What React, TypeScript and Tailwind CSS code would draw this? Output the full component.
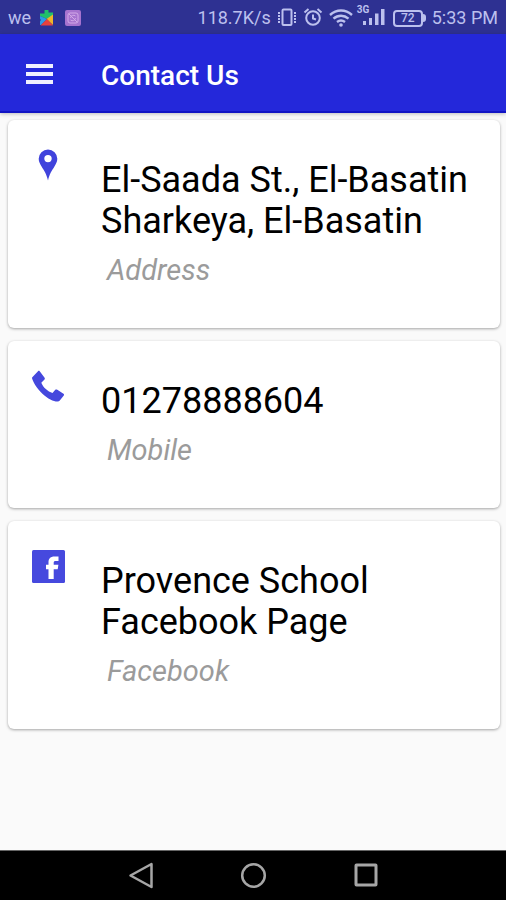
import type { ReactNode } from "react";

type Contact = { title: string; label: string; icon: ReactNode };

function PinIcon() {
  return (
    <svg viewBox="0 0 20 32" className="ml-1.5 h-8 w-5" aria-hidden="true">
      <path
        fill="#4043dc"
        fillRule="evenodd"
        d="M10 0.5a9.3 9.3 0 0 0-9.3 9.3c0 3 1.4 5.3 3 7.9C6 21.400 8.600 25 10 31.500 11.400 25 14 21.400 16.300 17.700c1.600-2.600 3-4.900 3-7.900A9.300 9.300 0 0 0 10 .5Zm0 5.400a3.700 3.700 0 1 1 0 7.400 3.700 3.700 0 0 1 0-7.400Z"
      />
    </svg>
  );
}

function PhoneIcon() {
  return (
    <svg viewBox="0 0 32 32" className="h-8 w-8" aria-hidden="true">
      <path
        fill="#4548dd"
        d="M0.300 7.300 6 1.200c.5-.5 1.200-.5 1.700.1l4.900 6.500c.4.600.3 1.100-.1 1.600L9.300 12.700c1.100 2.500 2.500 4.500 4.500 6.300 2 1.900 4.300 3.300 6.700 4l2.800-3.200c.4-.5 1-.5 1.600-.2l6.600 4.200c.6.400.7 1 .3 1.600l-4 5c-.5.700-1.200 1.100-2.100 1.200-3.400.3-9.800-2.500-15.300-7.800C5.100 18.600 1.200 12.500.1 8.500c-.1-.5-.1-.900.2-1.200Z"
      />
    </svg>
  );
}

function FacebookIcon() {
  return (
    <svg viewBox="0 0 34 34" className="h-[34px] w-[34px]" aria-hidden="true">
      <rect width="33" height="33" rx="1.500" fill="#4649de" />
      <path
        fill="#fff"
        d="M16.500 29V19.300h-2.500v-4.600h2.500v-2.300c0-3.800 2.200-5.900 5.800-5.900h4.200V11h-2.700c-1.600 0-2.100.6-2.100 1.900v1.800h4.700l-.7 4.600h-4V29Z"
      />
    </svg>
  );
}

const contacts: Contact[] = [
  { title: "El-Saada St., El-Basatin Sharkeya, El-Basatin", label: "Address", icon: <PinIcon /> },
  { title: "01278888604", label: "Mobile", icon: <PhoneIcon /> },
  { title: "Provence School Facebook Page", label: "Facebook", icon: <FacebookIcon /> },
];

function StatusBar() {
  return (
    <div className="flex h-[34px] items-center justify-between bg-[#2e3192] pt-0.5 pr-2 pl-2 text-lg text-[#bcc0ee]">
      <div className="flex items-center">
        <span>we</span>
        <svg viewBox="0 0 16 16" className="ml-2 h-4 w-4" aria-hidden="true">
          <path fill="#20c06a" d="M1 3.500h4.500V1a2 2 0 0 1 4 0v1.500H14v4L8 9 1 6Z" />
          <path fill="#2d9be8" d="M1 6l7 3-6 6H1v-3.500a2 2 0 0 0 0-3Z" />
          <path fill="#f0b429" d="M14 4.500V15L7.500 9Z" />
          <path fill="#e8413c" d="M1.500 15.500 8 9l6 6.500Z" />
        </svg>
        <svg viewBox="0 0 16 16" className="ml-2.5 h-4 w-4" aria-hidden="true">
          <rect width="16" height="16" rx="2" fill="#a673cf" />
          <g fill="none" stroke="#d2a9e8" strokeWidth="1">
            <rect x="3" y="3" width="10" height="10" rx="2" />
            <path d="M4 4l8 8M5.500 8a3 3 0 0 1 5-2M10.500 8a3 3 0 0 1-5 2" />
          </g>
        </svg>
      </div>
      <div className="flex items-center">
        <span>118.7K/s</span>
        <svg viewBox="0 0 20 20" className="ml-1.5 h-5 w-5" fill="none" stroke="currentColor" strokeWidth="2" aria-hidden="true">
          <rect x="5.500" y="1.500" width="9" height="15.500" rx="1" />
          <path strokeWidth="2" d="M2 4v11M18 4v11" strokeDasharray="2 1" />
        </svg>
        <svg viewBox="0 0 20 20" className="ml-1.5 h-5 w-5" fill="none" stroke="currentColor" strokeWidth="2" aria-hidden="true">
          <circle cx="10" cy="10" r="6.800" />
          <path d="M10 6.500v4l3 1M1.500 4.500l4-3.500M18.500 4.500l-4-3.500" />
        </svg>
        <svg viewBox="0 0 24 20" className="ml-1.5 h-5 w-6" fill="none" stroke="currentColor" strokeWidth="2.400" aria-hidden="true">
          <path d="M1 7c6.500-6 15.500-6 22 0M4.500 10.700c4.500-4 10.500-4 15 0M8 14c2.500-2 5.500-2 8 0" />
          <circle cx="12" cy="17" r="1.800" fill="currentColor" stroke="none" />
        </svg>
        <div className="relative ml-2 h-5 w-6">
          <span className="absolute -top-1 -left-1 text-[10px] leading-3 font-bold">3G</span>
          <svg viewBox="0 0 24 20" className="h-5 w-6" fill="currentColor" aria-hidden="true">
            <path d="M2 13h3v4H2zM8 10h3v7H8zM14 5.500h3.500V17H14zM20 1h3.500v16H20z" />
          </svg>
        </div>
        <div className="ml-2 flex items-center">
          <span className="flex h-[17px] w-[30px] items-center justify-center rounded-sm border-2 border-current text-xs font-medium">72</span>
          <span className="h-2 w-[3px] rounded-r-sm bg-current" />
        </div>
        <span className="ml-1.5">5:33 PM</span>
      </div>
    </div>
  );
}

function ContactCard({ title, label, icon }: Contact) {
  return (
    <li className="flex rounded-md bg-white pr-6 pl-6 shadow-[0_1px_3px_rgba(0,0,0,0.35)]">
      <div className="w-[69px] shrink-0 pt-[29px]">{icon}</div>
      <div className="min-w-0 pt-10 pb-10">
        <h2 className="text-4xl leading-[41px] text-black">{title}</h2>
        <p className="mt-2.5 ml-1.5 text-[29px] leading-9 text-[#9b9b9b] italic">{label}</p>
      </div>
    </li>
  );
}

export default function App() {
  return (
    <div className="flex min-h-screen flex-col bg-[#fafafa] font-['Roboto',sans-serif]">
      <StatusBar />
      <header className="flex h-[79px] items-center border-b-2 border-[#1114c4] bg-[#2428da] shadow-[0_1px_4px_rgba(0,0,0,0.25)]">
        <button type="button" aria-label="Open menu" className="ml-[26px] flex w-[27px] flex-col gap-1 pt-0.5">
          <span className="h-1 w-full bg-[#f0f0ff]" />
          <span className="h-1 w-full bg-[#f0f0ff]" />
          <span className="h-1 w-full bg-[#f0f0ff]" />
        </button>
        <h1 className="ml-12 pt-1.5 text-[28px] font-medium text-white">Contact Us</h1>
      </header>
      <main className="flex-1 pt-[7px] pr-1.5 pb-6 pl-2">
        <ul className="flex flex-col gap-[13px]">
          {contacts.map((contact) => (
            <ContactCard key={contact.label} {...contact} />
          ))}
        </ul>
      </main>
      <nav aria-label="System" className="flex h-[50px] items-center justify-center gap-[85px] border-t border-[#666666] bg-black text-[#a6a6a6]">
        <button type="button" aria-label="Back">
          <svg viewBox="0 0 28 28" className="h-7 w-7" fill="none" stroke="currentColor" strokeWidth="2.500" strokeLinejoin="round" aria-hidden="true">
            <path d="M4.500 13.500 25.500 2v23Z" />
          </svg>
        </button>
        <button type="button" aria-label="Home">
          <svg viewBox="0 0 28 28" className="h-7 w-7" fill="none" stroke="currentColor" strokeWidth="2.500" aria-hidden="true">
            <circle cx="14.500" cy="13.500" r="11.300" />
          </svg>
        </button>
        <button type="button" aria-label="Recent apps">
          <svg viewBox="0 0 28 28" className="h-7 w-7" fill="none" stroke="currentColor" strokeWidth="3" aria-hidden="true">
            <rect x="4" y="3" width="20" height="20" rx="0.500" />
          </svg>
        </button>
      </nav>
    </div>
  );
}
